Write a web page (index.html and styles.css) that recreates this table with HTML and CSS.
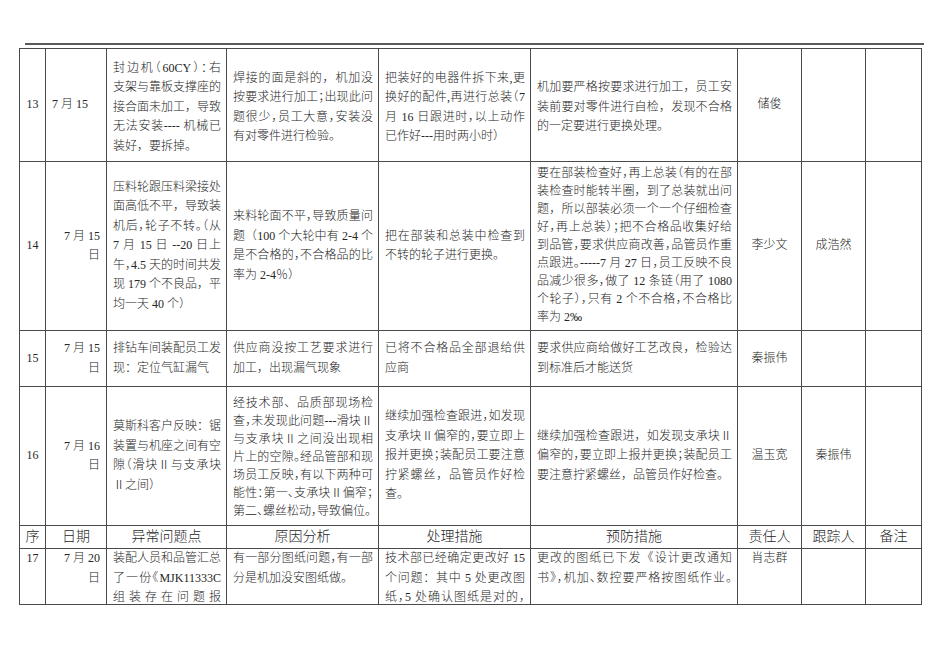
FILE: index.html
```html
<!DOCTYPE html>
<html lang="zh-CN">
<head>
<meta charset="utf-8">
<title>异常问题处理记录</title>
<link rel="stylesheet" href="styles.css">
</head>
<body>
<div class="page">
  <div class="rule"></div>
  <table class="grid">
    <colgroup>
      <col class="c-no"><col class="c-date"><col class="c-issue"><col class="c-cause"><col class="c-fix"><col class="c-prev"><col class="c-owner"><col class="c-track"><col class="c-note">
    </colgroup>
    <tbody>
      <tr class="r13">
        <td class="no">13</td>
        <td class="date left">7 月 15</td>
        <td class="txt">
          <span class="l t">封边机（60CY）：右</span>
          <span class="l">支架与靠板支撑座的</span>
          <span class="l">接合面未加工，导致</span>
          <span class="l">无法安装---- 机械已</span>
          <span class="l e">装好，要拆掉。</span>
        </td>
        <td class="txt">
          <span class="l">焊接的面是斜的，机加没</span>
          <span class="l t">按要求进行加工；出现此问</span>
          <span class="l t">题很少，员工大意，安装没</span>
          <span class="l e">有对零件进行检验。</span>
        </td>
        <td class="txt">
          <span class="l">把装好的电器件拆下来,更</span>
          <span class="l t">换好的配件,再进行总装（7</span>
          <span class="l t">月 16 日跟进时，以上动作</span>
          <span class="l e">已作好---用时两小时）</span>
        </td>
        <td class="txt">
          <span class="l">机加要严格按要求进行加工，员工安</span>
          <span class="l">装前要对零件进行自检，发现不合格</span>
          <span class="l e">的一定要进行更换处理。</span>
        </td>
        <td class="name">储俊</td>
        <td class="name"></td>
        <td class="name"></td>
      </tr>
      <tr class="r14">
        <td class="no">14</td>
        <td class="date">7 月 15<br>日</td>
        <td class="txt">
          <span class="l">压料轮跟压料梁接处</span>
          <span class="l">面高低不平，导致装</span>
          <span class="l t">机后，轮子不转。（从</span>
          <span class="l">7 月 15 日 --20 日上</span>
          <span class="l t">午，4.5 天的时间共发</span>
          <span class="l">现 179 个不良品，平</span>
          <span class="l e">均一天 40 个）</span>
        </td>
        <td class="txt">
          <span class="l t">来料轮面不平，导致质量问</span>
          <span class="l">题（100 个大轮中有 2-4 个</span>
          <span class="l t">是不合格的，不合格品的比</span>
          <span class="l e">率为 2-4％）</span>
        </td>
        <td class="txt">
          <span class="l">把在部装和总装中检查到</span>
          <span class="l e">不转的轮子进行更换。</span>
        </td>
        <td class="txt dense">
          <span class="l t">要在部装检查好，再上总装（有的在部</span>
          <span class="l">装检查时能转半圈，到了总装就出问</span>
          <span class="l">题，所以部装必须一个一个仔细检查</span>
          <span class="l t">好，再上总装）；把不合格品收集好给</span>
          <span class="l t">到品管，要求供应商改善，品管员作重</span>
          <span class="l t">点跟进。-----7 月 27 日，员工反映不良</span>
          <span class="l t">品减少很多，做了 12 条链（用了 1080</span>
          <span class="l t">个轮子），只有 2 个不合格，不合格比</span>
          <span class="l e">率为 2‰</span>
        </td>
        <td class="name">李少文</td>
        <td class="name">成浩然</td>
        <td class="name"></td>
      </tr>
      <tr class="r15">
        <td class="no">15</td>
        <td class="date">7 月 15<br>日</td>
        <td class="txt">
          <span class="l">排钻车间装配员工发</span>
          <span class="l e">现：定位气缸漏气</span>
        </td>
        <td class="txt">
          <span class="l">供应商没按工艺要求进行</span>
          <span class="l e">加工，出现漏气现象</span>
        </td>
        <td class="txt">
          <span class="l">已将不合格品全部退给供</span>
          <span class="l e">应商</span>
        </td>
        <td class="txt">
          <span class="l">要求供应商给做好工艺改良，检验达</span>
          <span class="l e">到标准后才能送货</span>
        </td>
        <td class="name">秦振伟</td>
        <td class="name"></td>
        <td class="name"></td>
      </tr>
      <tr class="r16">
        <td class="no">16</td>
        <td class="date">7 月 16<br>日</td>
        <td class="txt">
          <span class="l">莫斯科客户反映：锯</span>
          <span class="l">装置与机座之间有空</span>
          <span class="l t">隙（滑块Ⅱ与支承块</span>
          <span class="l e">Ⅱ之间）</span>
        </td>
        <td class="txt dense">
          <span class="l">经技术部、品质部现场检</span>
          <span class="l t">查，未发现此问题---滑块Ⅱ</span>
          <span class="l">与支承块Ⅱ之间没出现相</span>
          <span class="l t">片上的空隙。经品管部和现</span>
          <span class="l t">场员工反映，有以下两种可</span>
          <span class="l t">能性：第一、支承块Ⅱ偏窄；</span>
          <span class="l t e">第二、螺丝松动，导致偏位。</span>
        </td>
        <td class="txt">
          <span class="l t">继续加强检查跟进，如发现</span>
          <span class="l t">支承块Ⅱ偏窄的，要立即上</span>
          <span class="l t">报并更换；装配员工要注意</span>
          <span class="l">拧紧螺丝，品管员作好检</span>
          <span class="l e">查。</span>
        </td>
        <td class="txt">
          <span class="l">继续加强检查跟进，如发现支承块Ⅱ</span>
          <span class="l t">偏窄的，要立即上报并更换；装配员工</span>
          <span class="l e">要注意拧紧螺丝，品管员作好检查。</span>
        </td>
        <td class="name">温玉宽</td>
        <td class="name">秦振伟</td>
        <td class="name"></td>
      </tr>
      <tr class="head">
        <td>序</td>
        <td>日期</td>
        <td>异常问题点</td>
        <td>原因分析</td>
        <td>处理措施</td>
        <td>预防措施</td>
        <td>责任人</td>
        <td>跟踪人</td>
        <td>备注</td>
      </tr>
      <tr class="r17">
        <td class="no"><div class="clip">17</div></td>
        <td class="date"><div class="clip">7 月 20<br>日</div></td>
        <td class="txt"><div class="clip">
          <span class="l">装配人员和品管汇总</span>
          <span class="l t">了一份《MJK11333C</span>
          <span class="l">组装存在问题报</span>
        </div></td>
        <td class="txt"><div class="clip">
          <span class="l t">有一部分图纸问题，有一部</span>
          <span class="l e">分是机加没安图纸做。</span>
        </div></td>
        <td class="txt"><div class="clip">
          <span class="l">技术部已经确定更改好 15</span>
          <span class="l">个问题：其中 5 处更改图</span>
          <span class="l t">纸，5 处确认图纸是对的，</span>
        </div></td>
        <td class="txt"><div class="clip">
          <span class="l">更改的图纸已下发《设计更改通知</span>
          <span class="l t">书》，机加、数控要严格按图纸作业。</span>
        </div></td>
        <td class="name"><div class="clip">肖志群</div></td>
        <td class="name"><div class="clip"></div></td>
        <td class="name"><div class="clip"></div></td>
      </tr>
    </tbody>
  </table>
</div>
</body>
</html>
```
FILE: styles.css
```css
html, body {
  margin: 0;
  padding: 0;
  background: #ffffff;
}

body {
  font-family: "Liberation Serif", "Noto Sans CJK SC", serif;
  font-size: 12px;
  color: #262626;
}

.page {
  padding: 43px 0 0 19px;
  width: 906px;
}

.rule {
  margin-left: 6px;
  width: 899px;
  height: 2px;
  background: #5a5a5a;
  margin-bottom: 3px;
}

.grid {
  border-collapse: collapse;
  table-layout: fixed;
  width: 902px;
}

.c-no { width: 26px; }
.c-date { width: 61px; }
.c-issue { width: 120px; }
.c-cause { width: 152px; }
.c-fix { width: 152px; }
.c-prev { width: 207px; }
.c-owner { width: 64px; }
.c-track { width: 64px; }
.c-note { width: 56px; }

.grid td {
  border: 1px solid #4a4a4a;
  padding: 0 5px 0 6px;
  vertical-align: middle;
  line-height: 19.5px;
  font-weight: 300;
}

.grid td.no {
  padding: 0;
  text-align: center;
}

.grid td.date {
  text-align: right;
  padding: 0 6px 0 4px;
}

.grid td.date.left {
  text-align: left;
  padding-left: 6px;
}

.grid td.name {
  padding: 0;
  text-align: center;
}

.l {
  display: block;
  text-align: justify;
  text-align-last: justify;
}

.l.e {
  text-align-last: left;
}

.l.t {
  font-feature-settings: "halt" 1;
}

.dense .l {
  line-height: 17.9px;
}

.r13 td { height: 112px; }
.r13 td.txt { height: 107px; padding-top: 5px; }
.r14 td { height: 168px; }
.r15 td { height: 55px; }
.r16 td { height: 138px; }
.r16 td.dense { height: 134px; padding-top: 4px; }

.head td {
  height: 22px;
  font-size: 14px;
  line-height: 22px;
  text-align: center;
  padding: 0;
}

.r17 td {
  height: 55px;
  vertical-align: top;
}

.clip {
  height: 55px;
  overflow: hidden;
}
```
